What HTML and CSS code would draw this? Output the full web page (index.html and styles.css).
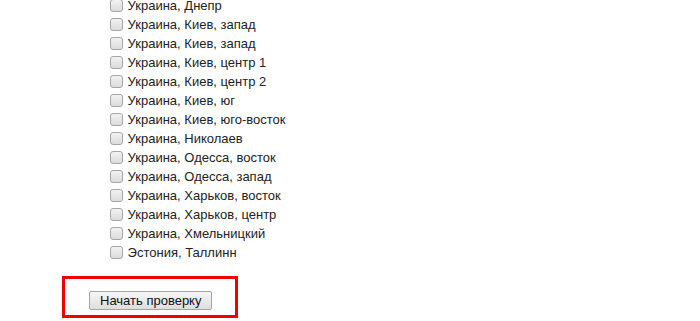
FILE: index.html
```html
<!DOCTYPE html>
<html lang="ru">
<head>
  <meta charset="UTF-8" />
  <title>Проверка</title>
  <link rel="stylesheet" href="styles.css">
</head>
<body>

  <ul class="region-list">
    <li><label><input type="checkbox"> Украина, Днепр</label></li>
    <li><label><input type="checkbox"> Украина, Киев, запад</label></li>
    <li><label><input type="checkbox"> Украина, Киев, запад</label></li>
    <li><label><input type="checkbox"> Украина, Киев, центр 1</label></li>
    <li><label><input type="checkbox"> Украина, Киев, центр 2</label></li>
    <li><label><input type="checkbox"> Украина, Киев, юг</label></li>
    <li><label><input type="checkbox"> Украина, Киев, юго-восток</label></li>
    <li><label><input type="checkbox"> Украина, Николаев</label></li>
    <li><label><input type="checkbox"> Украина, Одесса, восток</label></li>
    <li><label><input type="checkbox"> Украина, Одесса, запад</label></li>
    <li><label><input type="checkbox"> Украина, Харьков, восток</label></li>
    <li><label><input type="checkbox"> Украина, Харьков, центр</label></li>
    <li><label><input type="checkbox"> Украина, Хмельницкий</label></li>
    <li><label><input type="checkbox"> Эстония, Таллинн</label></li>
  </ul>

  <div class="start-box">
    <button class="start-btn">Начать проверку</button>
  </div>

</body>
</html>
```

FILE: styles.css
```css
/* Base */
* {
  box-sizing: border-box;
  margin: 0;
  padding: 0;
}

body {
  font-family: "Liberation Sans", Arial, sans-serif;
  font-size: 13px;
  color: #222;
  background: #fff;
}

/* Region list */
.region-list {
  list-style: none;
  margin: -4px 0 0 110px;
}

.region-list li {
  height: 19px;
  display: flex;
  align-items: center;
}

.region-list label {
  display: flex;
  align-items: center;
  white-space: pre;
}

.region-list input {
  appearance: none;
  -webkit-appearance: none;
  width: 13px;
  height: 13px;
  margin: 0 1px 0 0;
  border: 1px solid #a6a6a6;
  border-radius: 3px;
  background: linear-gradient(#f2f2f2, #dcdcdc);
}

/* Highlighted start button */
.start-box {
  width: 176px;
  height: 42px;
  margin: 14px 0 0 62px;
  border: 3px solid #f00000;
  padding: 12px 0 0 24px;
}

.start-btn {
  font-family: "Liberation Sans", Arial, sans-serif;
  font-size: 13px;
  color: #111;
  height: 19px;
  padding: 0 10px;
  border: 1px solid #a5a5a5;
  border-radius: 2px;
  background: linear-gradient(#f6f6f6, #dedede);
}
```
